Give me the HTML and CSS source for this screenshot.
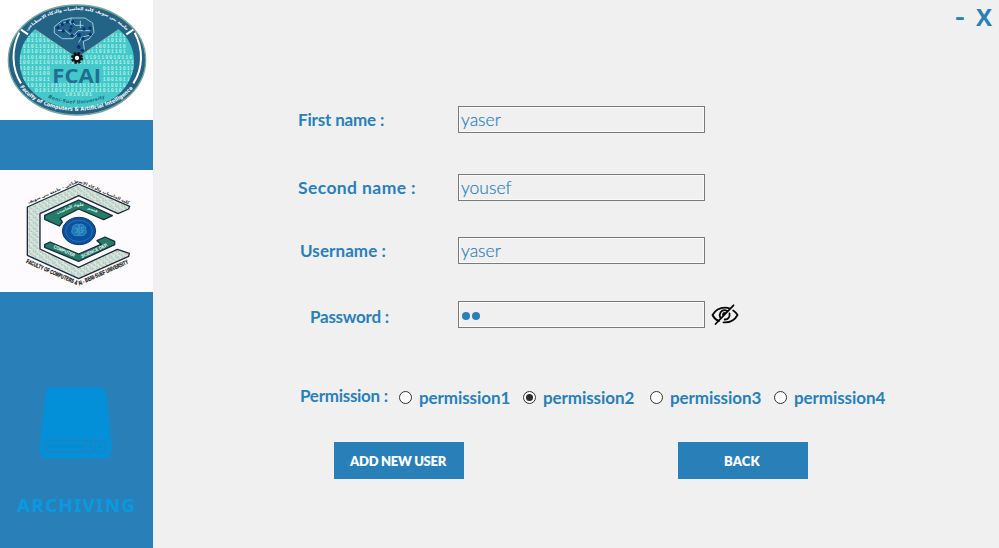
FILE: index.html
```
<!DOCTYPE html>
<html lang="en">
<head>
<meta charset="utf-8">
<title>Add new user</title>
<link rel="stylesheet" href="styles.css">
</head>
<body>
<div class="window">
  <aside class="sidebar">
    <svg class="logo-faculty" viewBox="0 0 459 360" role="img" aria-label="FCAI">
      <defs>
        <clipPath id="fan"><path d="M105 88 L231 174 L356 88 C432 151 408 259 330 301 C272 333 191 333 132 301 C49 255 32 151 105 88Z"/></clipPath>
        <path id="ringTop" d="M78 97 C156 8 306 8 384 97"/>
        <path id="ringBottom" d="M60 261 C132 357 331 357 405 257"/>
        <path id="uni" d="M144 293 Q231 329 320 292"/>
      </defs>
      <ellipse cx="231" cy="180" rx="206" ry="165" fill="#236486" stroke="#7aa69a" stroke-width="4"/>
      <g clip-path="url(#fan)">
        <rect x="45" y="80" width="370" height="250" fill="#43c9c9"/>
        <g class="bits">
          <text x="68" y="110">010110</text><text x="308" y="110">010110</text>
          <text x="68" y="127">101101011</text><text x="284" y="127">10110101</text>
          <text x="68" y="143">01011010110</text><text x="260" y="143">1010010110</text>
          <text x="68" y="160">1010110100101</text><text x="248" y="160">10110101101</text>
          <text x="56" y="177">01101001011010</text><text x="256" y="177">010110010110</text>
          <text x="56" y="193">10010110100101011010110101101</text>
          <text x="56" y="210">01011010</text><text x="308" y="210">01011010</text>
          <text x="56" y="226">10110100</text><text x="308" y="226">11011010</text>
          <text x="68" y="243">0101011</text><text x="308" y="243">1001011</text>
          <text x="80" y="260">10101101001011010110100101</text>
          <text x="104" y="275">0101101010110101101010</text>
          <text x="195" y="289">1010101</text>
        </g>
      </g>
      <path d="M105 88 L231 174 L356 88" fill="none" stroke="#a5b69c" stroke-width="2"/>
      <path d="M63 89 L84 103 M58 98 C34 145 34 205 63 250 M400 89 L379 103 M404 98 C430 145 430 205 400 250" fill="none" stroke="#fff" stroke-width="6"/>
      <g fill="none" stroke="#b5dfea" stroke-width="2.5">
        <path d="M219 116 H187 L163 99 V80 L187 61 L213 54 H255 L278 69 L282 97 L267 117 L250 124 L253 149"/>
        <path d="M178 75 L198 66 H216 L226 76 H250 M174 91 H196 L210 103 H224 L234 92 H270 M219 116 L232 104 M241 62 V84 M213 54 V74 M236 128 L245 112 L274 104"/>
      </g>
      <g fill="#08327a">
        <circle cx="174" cy="83" r="5"/><circle cx="187" cy="73" r="5"/><circle cx="202" cy="66" r="5"/><circle cx="218" cy="65" r="5"/><circle cx="190" cy="93" r="5"/><circle cx="211" cy="91" r="5"/><circle cx="216" cy="106" r="5"/><circle cx="237" cy="105" r="6"/><circle cx="252" cy="87" r="5"/><circle cx="270" cy="84" r="5"/><circle cx="271" cy="103" r="5"/><circle cx="249" cy="116" r="5"/><circle cx="236" cy="141" r="6"/><circle cx="247" cy="151" r="5"/><circle cx="214" cy="80" r="4"/>
      </g>
      <circle cx="231" cy="174" r="15" fill="none" stroke="#111" stroke-width="6" stroke-dasharray="7 4.8"/>
      <circle cx="231" cy="174" r="10" fill="#fff" stroke="#111" stroke-width="7"/>
      <text class="fcai" x="157" y="250" textLength="146" lengthAdjust="spacingAndGlyphs">FCAI</text>
      <text class="uni"><textPath href="#uni" textLength="176">Beni-Suef University</textPath></text>
      <text class="ring ring-ar" text-anchor="middle"><textPath href="#ringTop" startOffset="50%">جامعة بني سويف كلية الحاسبات والذكاء الاصطناعي</textPath></text>
      <text class="ring"><textPath href="#ringBottom" textLength="378" lengthAdjust="spacingAndGlyphs">Faculty of Computers &amp; Artificial Intelligence</textPath></text>
    </svg>

    <svg class="logo-dept" viewBox="0 15 459 366" role="img" aria-label="Computer Science Dep.">
      <defs>
        <pattern id="circuit" width="19" height="17" patternUnits="userSpaceOnUse">
          <rect width="19" height="17" fill="#e3ece6"/>
          <path d="M1 3h5v4h4M12 0v5h5M3 10v5h6M11 9h3v6M16 10h2v5M8 1v3" fill="none" stroke="#76a18e" stroke-width="1.5"/>
        </pattern>
        <path id="deptTop" d="M72 122 L236 52 L400 124"/>
        <path id="deptBottom" d="M80 288 L236 356 L392 286"/>
      </defs>
      <path d="M236 57 L389 124 L386 132 L354 146 L236 92 L120 146 V252 L236 307 L352 253 L388 265 L386 274 L236 341 L82 271 V126Z" fill="url(#circuit)" stroke="#1d2c40" stroke-width="4" stroke-linejoin="round"/>
      <path d="M134 151 L236 105 L337 152 L311 164 L236 132 L180 160 L187 171 L178 183 L134 163Z" fill="#237b69" stroke="#172e3b" stroke-width="4" stroke-linejoin="round"/>
      <path d="M134 239 L150 231 L236 267 L303 238 L291 227 L315 216 L344 229 V239 L236 289 L134 247Z" fill="#237b69" stroke="#172e3b" stroke-width="4" stroke-linejoin="round"/>
      <ellipse cx="237" cy="198" rx="50" ry="41" fill="#0b51a0" stroke="#173a65" stroke-width="3"/>
      <ellipse cx="237" cy="198" rx="40" ry="32" fill="none" stroke="#2b86c8" stroke-width="2"/>
      <path d="M236 178c-12-2-21 6-19 15-6 8 2 19 12 19h7zm2 0c12-2 21 6 19 15 6 8-2 19-12 19h-7z" fill="#1d78b8" stroke="#47a5d8" stroke-width="2"/>
      <path d="M223 190h9v12h-6M252 188h-8v8h9M243 206v-5h8" fill="none" stroke="#6fc0e4" stroke-width="1.5"/>
      <text class="tag" transform="translate(160 249) rotate(23)" textLength="68" lengthAdjust="spacingAndGlyphs">COMPUTER</text>
      <text class="tag" transform="translate(246 279) rotate(-25)" textLength="86" lengthAdjust="spacingAndGlyphs">SCIENCE DEP.</text>
      <text class="tag-ar" transform="translate(172 148) rotate(-24)">الحاسب</text>
      <text class="tag-ar" transform="translate(221 123)">علوم</text>
      <text class="tag-ar" transform="translate(262 131) rotate(24)">قسم</text>
      <text class="dept-ar" text-anchor="middle"><textPath href="#deptTop" startOffset="50%">كلية الحاسبات والذكاء الاصطناعي - جامعة بني سويف</textPath></text>
      <text class="dept-en"><textPath href="#deptBottom" textLength="332" lengthAdjust="spacingAndGlyphs">FACULTY OF COMPUTERS &amp; AI - BENI-SUEF UNIVERSITY</textPath></text>
    </svg>

    <svg class="archiving" viewBox="0 0 459 480" role="img" aria-label="Archiving">
      <path d="M158 52 H297 Q316 52 319 71 L334 224 V242 Q334 265 311 265 H143 Q120 265 120 242 V224 L136 71 Q139 52 158 52Z" fill="#0390d8"/>
      <rect x="137" y="212" width="180" height="34" rx="10" fill="#0390d8" stroke="#1985c4" stroke-width="6"/>
      <path d="M151 229 H246" stroke="#078bcf" stroke-width="13" stroke-linecap="round"/>
      <path d="M257 214v31M286 214v31" stroke="#1985c4" stroke-width="7"/>
      <circle cx="273" cy="229" r="6" fill="#078bcf"/><circle cx="300" cy="229" r="6" fill="#078bcf"/>
      <text class="archiving-text" x="52" y="425" textLength="357" lengthAdjust="spacingAndGlyphs">ARCHIVING</text>
    </svg>
  </aside>

  <main class="content">
    <header class="controls"><span class="minimize">-</span><span class="close">X</span></header>
    <form class="form">
      <div class="row first"><label for="first">First name :</label><input id="first" value="yaser"></div>
      <div class="row second"><label for="second">Second name :</label><input id="second" value="yousef"></div>
      <div class="row username"><label for="user">Username :</label><input id="user" value="yaser"></div>
      <div class="row password"><label for="pass">Password :</label><div class="secret" id="pass"><i></i><i></i></div>
        <svg class="eye" viewBox="0 0 28 24" fill="none" stroke="#080808" stroke-width="1.8" stroke-linecap="round"><path d="M8 18C5.300 17 3 15.200 1.500 12C4 7.500 8.500 4.600 14 4.600C15.800 4.600 17.500 5 19 5.600M22.200 7.400C24.200 8.700 25.700 10.300 26.500 12C24 16.700 19.500 19.400 14 19.400L12.500 19.300M9.200 14.500C7.700 10.300 10.200 7 14 7.200L16 7.800M18.500 10.500C19.200 14 17 16.700 13.700 16.500M12 12C12 10.700 12.800 10 14 10M4.500 21L22.500 2.300"/></svg>
      </div>
      <div class="permissions">
        <span class="caption">Permission :</span>
        <label class="option o1"><span class="radio"></span><span>permission1</span></label>
        <label class="option o2"><span class="radio checked"></span><span>permission2</span></label>
        <label class="option o3"><span class="radio"></span><span>permission3</span></label>
        <label class="option o4"><span class="radio"></span><span>permission4</span></label>
      </div>
      <div class="actions"><button type="button" class="add">ADD NEW USER</button><button type="button" class="back">BACK</button></div>
    </form>
  </main>
</div>
</body>
</html>
```
FILE: styles.css
```
* { box-sizing: border-box; }
body { margin: 0; font-family: Lato, "Open Sans", sans-serif; color: #2980b9; background: #f0f0f0; }
.window { display: flex; width: 999px; height: 548px; overflow: hidden; }
.sidebar { width: 153px; flex: none; background: #2980b9; display: flex; flex-direction: column; }
.sidebar svg { display: block; width: 153px; flex: none; }
.logo-faculty { height: 120px; background: #fff; }
.logo-dept { height: 122px; margin-top: 50px; background: #fdfbfd; }
.archiving { height: 160px; margin-top: 78px; }
.bits { font: bold 15px "Liberation Mono", monospace; letter-spacing: 3px; fill: #b3f0e8; }
.fcai { font: bold 56px "Open Sans", sans-serif; fill: #236d91; }
.uni { font: italic bold 14px "DejaVu Sans", sans-serif; fill: #236a87; }
.ring { font: bold 16px "DejaVu Sans", sans-serif; fill: #fff; }
.ring-ar { font-size: 13px; }
.tag { font: bold 14px "Liberation Sans", sans-serif; fill: #fff; }
.tag-ar { font: bold 13px "DejaVu Sans", sans-serif; fill: #d8efe4; }
.dept-ar { font: bold 12.5px "DejaVu Sans", sans-serif; fill: #252629; }
.dept-en { font: bold 18px "Liberation Sans", sans-serif; fill: #111; stroke: #111; stroke-width: .6px; dominant-baseline: middle; }
.archiving-text { font: bold 55px "Noto Sans", sans-serif; letter-spacing: 4px; fill: #079ae1; }
.content { flex: 1; min-width: 0; }
.controls { display: flex; justify-content: flex-end; gap: 12px; height: 36px; padding: 2px 7px 0 0; font: bold 24px/30px "Open Sans", sans-serif; }
.minimize { margin-top: -1px; transform: scaleX(1.2); }
.form { padding: 70px 0 0 145px; }
.row { display: flex; align-items: center; height: 27px; }
.row label { width: 160px; flex: none; font-size: 17px; font-weight: 700; line-height: 27px; white-space: nowrap; }
.row input, .secret { width: 247px; height: 27px; border: 1px solid #7a7a7a; outline: 1px solid #fafafa; outline-offset: -2px; border-radius: 0; background: #f0f0f0; padding: 0 2px; font: 300 17.5px Lato, sans-serif; color: #2980b9; -webkit-text-stroke: .2px #2980b9; }
.first label { letter-spacing: -.17px; }
.second { margin-top: 41px; }
.second label { font-size: 17.5px; letter-spacing: .4px; }
.username { margin-top: 36px; }
.password { margin-top: 37px; }
.username label { padding-left: 2px; letter-spacing: .08px; }
.password label { padding: 3px 0 0 12px; letter-spacing: -.25px; }
.secret { display: flex; align-items: center; gap: 2px; padding: 2px 0 0 3px; }
.secret i { width: 8px; height: 8px; border-radius: 50%; background: #2980b9; }
.eye { width: 28px; height: 24px; margin-left: 6px; }
.permissions { display: flex; align-items: center; height: 26px; margin-top: 56px; font-size: 17px; font-weight: 700; white-space: nowrap; }
.caption { width: 101px; padding: 0 0 3px 2px; letter-spacing: -.28px; }
.option { display: flex; align-items: center; gap: 7px; letter-spacing: -.08px; }
.o1 { width: 124px; }
.o2 { width: 127px; }
.o3 { width: 124px; }
.radio { display: flex; align-items: center; justify-content: center; width: 13px; height: 13px; border: 1px solid #333; border-radius: 50%; background: #fff; }
.checked::after { content: ""; width: 7px; height: 7px; border-radius: 50%; background: #2c2c2c; }
.actions { display: flex; gap: 214px; margin: 32px 0 0 36px; }
.actions button { width: 130px; height: 37px; padding: 0 2px 0 0; border: 0; border-radius: 0; background: #2980b9; color: #fff; font: 800 13px Lato, sans-serif; letter-spacing: -.3px; }
.actions .back { letter-spacing: .2px; }
```
